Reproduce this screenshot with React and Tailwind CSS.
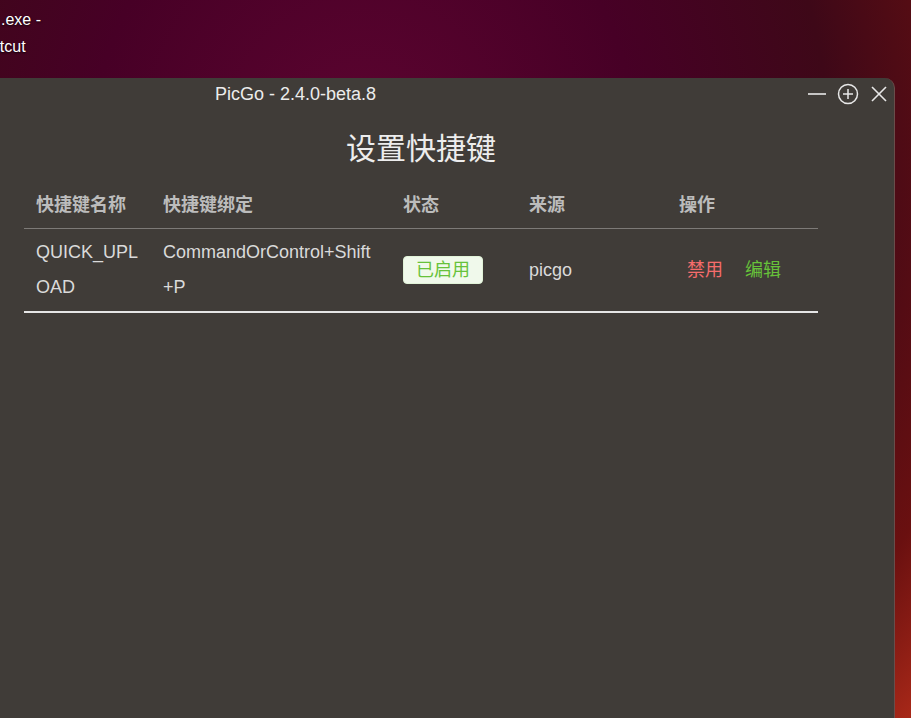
import React from 'react';

const font = { fontFamily: '"Liberation Sans", "Noto Sans CJK SC", sans-serif' };

const columns = [
  { key: 'name', label: '快捷键名称', w: 'w-[127px]' },
  { key: 'bind', label: '快捷键绑定', w: 'w-[240px]' },
  { key: 'status', label: '状态', w: 'w-[126px]' },
  { key: 'from', label: '来源', w: 'w-[150px]' },
  { key: 'op', label: '操作', w: 'w-[151px]' },
];

const WindowControls = () => (
  <div className="flex items-center gap-[10px] pr-[5px]">
    <svg width="20" height="20" viewBox="0 0 20 20">
      <line x1="1" y1="10" x2="19" y2="10" stroke="#e8e8e8" strokeWidth="1.6" />
    </svg>
    <svg width="22" height="22" viewBox="0 0 22 22">
      <circle cx="11" cy="11" r="9.5" fill="none" stroke="#e8e8e8" strokeWidth="1.5" />
      <line x1="11" y1="6" x2="11" y2="16" stroke="#e8e8e8" strokeWidth="1.5" />
      <line x1="6" y1="11" x2="16" y2="11" stroke="#e8e8e8" strokeWidth="1.5" />
    </svg>
    <svg width="20" height="20" viewBox="0 0 20 20">
      <line x1="3" y1="3" x2="17" y2="17" stroke="#e8e8e8" strokeWidth="1.6" />
      <line x1="17" y1="3" x2="3" y2="17" stroke="#e8e8e8" strokeWidth="1.6" />
    </svg>
  </div>
);

export default function App() {
  return (
    <div
      className="relative w-[911px] h-[718px] overflow-hidden bg-[radial-gradient(ellipse_at_40%_20%,#5c0430_0%,#470026_35%,#3e0818_60%,#6a1010_85%,#a82818_100%)]"
      style={font}
    >
      {/* desktop icon labels, cut off on the left */}
      <div className="absolute left-0 top-[6px] text-[16px] leading-[27px] text-white [text-shadow:0_1px_2px_rgba(0,0,0,0.8)]">
        <div className="ml-[1px]">.exe -</div>
        <div className="ml-[-34px]">Shortcut</div>
      </div>

      {/* PicGo window */}
      <div className="absolute left-0 top-[78px] w-[895px] h-[660px] bg-[#403c38] rounded-tr-[10px] border-r border-[#6a4d4a] flex flex-col">
        <div className="h-[32px] flex items-center justify-between">
          <div className="pl-[215px] text-[18px] text-[#ececec]">PicGo - 2.4.0-beta.8</div>
          <WindowControls />
        </div>

        <div className="pl-[24px] w-[818px]">
          <h1 className="mt-[19px] h-[40px] leading-[40px] text-center text-[30px] text-[#ededed]">设置快捷键</h1>

          <div className="mt-[12px] text-[18px]">
            <div className="flex h-[48px] pt-[2px] items-center border-b border-[#7d7a77] font-bold text-[#bcbcbc]">
              {columns.map((c) => (
                <div key={c.key} className={`${c.w} pl-[12px]`}>{c.label}</div>
              ))}
            </div>
            <div className="flex items-center py-[6px] border-b-2 border-[#e6e6e6] text-[#dadada] leading-[35px]">
              <div className="w-[127px] pl-[12px] break-all pr-[8px]">QUICK_UPLOAD</div>
              <div className="w-[240px] pl-[12px] pr-[4px]">CommandOrControl+Shift<wbr />+P</div>
              <div className="w-[126px] pl-[12px]">
                <span className="inline-flex h-[28px] items-center px-[12px] rounded-[4px] bg-[#f0f9eb] border border-[#e1f3d8] text-[#67c23a] leading-[26px]">已启用</span>
              </div>
              <div className="w-[150px] pl-[12px]">picgo</div>
              <div className="w-[151px] pl-[20px] flex gap-[22px]">
                <span className="text-[#f56c6c]">禁用</span>
                <span className="text-[#67c23a]">编辑</span>
              </div>
            </div>
          </div>
        </div>
      </div>
    </div>
  );
}
